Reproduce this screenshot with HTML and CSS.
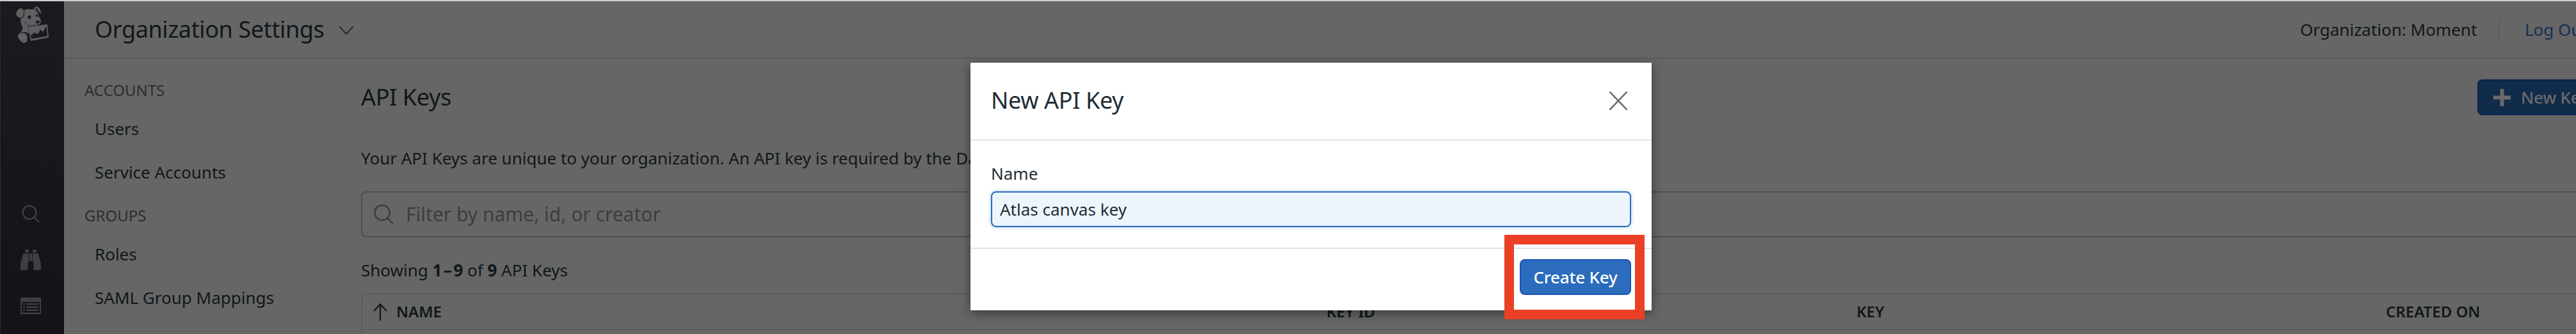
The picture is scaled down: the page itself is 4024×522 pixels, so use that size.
FILE: index.html
```html
<!DOCTYPE html>
<html lang="en">
<head>
<meta charset="utf-8">
<title>Organization Settings</title>
<link rel="stylesheet" href="styles.css">
</head>
<body>
<div class="app">
  <aside class="rail">
    <svg class="logo" viewBox="72 26 160 180">
      <path fill="#606062" d="M92 38C82 44 75 56 76 65C77 75 87 83 96 82C105 81 110 77 111 71L113 50C110 42 101 35 92 38Z"/>
      <path fill="#606062" d="M114 46C122 43 130 42 134 40L142 43L160 42C166 43 172 50 178 60L183 78C190 84 193 92 192 100C191 112 182 118 168 120C155 124 140 124 134 127L139 158C132 156 127 152 119 150C110 149 101 151 97 153C101 145 104 137 107 128L98 107C96 100 97 91 98 85C107 83 113 77 114 71Z"/>
      <path fill="#606062" d="M160 40C163 33 168 28 174 29C184 32 192 44 194 60C187 59 183 56 179 49L173 36C169 37 168 40 166 44Z"/>
      <path fill="#606062" d="M95 154C87 157 83 166 84 173C85 180 93 183 98 193C104 203 121 203 127 193C131 180 129 164 120 157C112 151 102 151 95 154Z"/>
      <path fill="none" stroke="#1b191e" stroke-width="2" d="M112 49C114 62 112 76 104 81M97 155C110 150 123 155 129 167M117 103C126 115 141 121 154 119C162 117 169 110 173 107"/>
      <ellipse cx="138" cy="79" rx="8" ry="8" fill="#1b191e" transform="rotate(-25 138 79)"/>
      <ellipse cx="173" cy="72" rx="5" ry="6" fill="#1b191e"/>
      <path fill="#1b191e" d="M166 99C171 95 180 94 187 97C189 103 183 109 177 109C171 108 169 102 166 99ZM176 108l6 8 8 -3 -2 6 -12 1z"/>
      <path fill="#606062" stroke="#1b191e" stroke-width="7" d="M134 127L221 115L227 173L146 189Z"/>
      <path fill="#606062" stroke="#606062" stroke-width="4" d="M134 127L221 115L227 173L146 189Z"/>
      <path fill="#1b191e" d="M148 182L144 162L150 164L160 151L167 156L179 158L190 137L202 149L218 122L223 168Z"/>
    </svg>
    <nav class="rail-nav">
      <svg class="rail-icon" viewBox="0 0 32 32"><g fill="none" stroke="#3f3e42" stroke-width="2.4"><circle cx="14" cy="15" r="10.4"/><path d="M21.500 22.500L29 30.500"/></g></svg>
      <svg class="rail-icon" viewBox="0 0 32 32"><path fill="#3f3e42" d="M7 0h6v4.500h-6zM19 0h6v4.500h-6zM4.500 6h8.500v14h-1.500v12h-11.500v-10zM19 6h8.500l4.500 16v10h-11.500v-12h-1.500zM14 6h4v12h-4z"/></svg>
      <svg class="rail-icon" viewBox="0 1 32 32"><path fill="#3f3e42" fill-rule="evenodd" d="M2 3h28q2 0 2 2v22q0 2 -2 2h-28q-2 0 -2 -2v-22q0 -2 2 -2zM2 10v16.500h28v-16.500zM4 12h3v2.500h-3zM9 12h19v2.500h-19zM4 16.800h3v2.500h-3zM9 16.800h19v2.500h-19zM4 21.600h3v2.500h-3zM9 21.600h19v2.500h-19z"/></svg>
    </nav>
  </aside>

  <div class="page">
    <header class="topbar">
      <div class="topbar-title">Organization Settings
        <svg class="chevron" viewBox="0 0 24 16"><path d="M1.500 1.500L12 13L22.500 1.500" fill="none" stroke="#2c3134" stroke-width="2.400"/></svg>
      </div>
      <div class="account">
        <span class="org">Organization: Moment</span>
        <span class="divider"></span>
        <a class="logout">Log Out</a>
      </div>
    </header>

    <div class="content">
      <nav class="menu">
        <div class="menu-label">ACCOUNTS</div>
        <a class="menu-item">Users</a>
        <a class="menu-item">Service Accounts</a>
        <div class="menu-label menu-label-next">GROUPS</div>
        <a class="menu-item">Roles</a>
        <a class="menu-item">SAML Group Mappings</a>
      </nav>

      <main class="main">
        <div class="main-head">
          <h1 class="heading">API Keys</h1>
          <button class="new-key"><svg class="plus" viewBox="0 0 27 27"><path fill="#6b6b6b" d="M10.500 0h6v10.500h10.500v6h-10.500v10.500h-6v-10.500h-10.500v-6h10.500z"/></svg>New Key</button>
        </div>
        <p class="intro">Your API Keys are unique to your organization. An API key is required by the Datadog Agent.</p>
        <div class="filter">
          <svg class="filter-icon" viewBox="0 0 32 32"><g fill="none" stroke="#3a3e40" stroke-width="2.400"><circle cx="13" cy="13.500" r="11.700"/><path d="M21 22L30 31"/></g></svg>
          <span>Filter by name, id, or creator</span>
        </div>
        <p class="count">Showing <b>1<span class="dash">–</span>9</b> of <b>9</b> API Keys</p>
        <div class="table">
          <div class="table-head">
            <div class="cell cell-name"><svg class="arrow" viewBox="0 0 22 27"><path d="M11 27V1.500M1 12L11 1.500L21 12" fill="none" stroke="#10171a" stroke-width="2.200"/></svg>NAME</div>
            <div class="cell">KEY ID</div>
            <div class="cell">KEY</div>
            <div class="cell">CREATED ON</div>
          </div>
        </div>
      </main>
    </div>
  </div>

  <section class="modal">
    <div class="modal-head">
      <h2 class="modal-title">New API Key</h2>
      <svg class="close" viewBox="0 0 28 29"><path d="M1.200 1.200L26.800 27.800M26.800 1.200L1.200 27.800" fill="none" stroke="#646c73" stroke-width="2.500" stroke-linecap="round"/></svg>
    </div>
    <div class="modal-body">
      <label class="field-label">Name</label>
      <div class="field">Atlas canvas key</div>
    </div>
    <div class="modal-foot">
      <button class="create">Create Key</button>
    </div>
  </section>
  <div class="highlight"></div>
</div>
</body>
</html>
```

FILE: styles.css
```css
* { box-sizing: border-box; }

html { height: 522px; overflow: hidden; }

body {
  height: 522px;
  margin: 0;
  overflow: hidden;
  background: #666;
  color: #10171a;
  font: 26px/40px "Noto Sans", "Liberation Sans", sans-serif;
}

h1, h2, p { margin: 0; font-weight: 400; }

.app {
  position: relative;
  display: flex;
  width: 4024px;
  height: 522px;
  border-top: 2px solid #cfcfcf;
  overflow: hidden;
}

.rail {
  display: flex;
  flex-direction: column;
  flex: none;
  width: 100px;
  padding: 7px 0 0;
  border-left: 1px solid #2d2c32;
  background: linear-gradient(#1c1a1f, #151319);
}

.logo { width: 53px; height: 60px; margin-left: 23px; }

.rail-nav {
  display: flex;
  flex-direction: column;
  gap: 41px;
  margin: 248px 0 0 31px;
}

.rail-icon { width: 32px; height: 32px; }

.page { flex: 1; min-width: 0; }

.topbar {
  display: flex;
  justify-content: space-between;
  height: 90px;
  padding-left: 48px;
  border-bottom: 2px solid #5b5b5c;
}

.topbar-title {
  display: flex;
  align-items: center;
  gap: 22px;
  font-size: 36px;
  letter-spacing: -.37px;
}

.chevron { width: 24px; height: 16px; margin-top: 3px; }

.account { display: flex; align-items: center; width: 431px; white-space: nowrap; }
.org { flex: none; width: 309px; }
.divider { flex: none; width: 4px; height: 34px; margin-right: 38px; background: #5e6063; }
.logout { flex: none; color: #142f54; }

.content { display: flex; }

.menu { flex: none; width: 464px; padding: 24px 0 0 32px; }
.menu-label { height: 52px; line-height: 50px; font-size: 24px; color: #2a2f32; }
.menu-label-next { margin-top: 8px; }
.menu-item { display: block; height: 68px; padding-left: 16px; line-height: 67px; }

.main { flex: 1; min-width: 0; padding-top: 32px; }

.main-head { display: flex; justify-content: space-between; align-items: center; height: 56px; }
.heading { font-size: 36px; letter-spacing: -.37px; }

.new-key {
  display: flex;
  align-items: center;
  gap: 16px;
  flex: none;
  width: 190px;
  height: 56px;
  margin-right: -36px;
  padding: 0 0 0 23px;
  border: 2px solid #0c2152;
  border-radius: 8px;
  background: #112b4a;
  color: #6b6b6b;
  font: 500 26px "Noto Sans", sans-serif;
  letter-spacing: -.2px;
  white-space: nowrap;
}

.plus { flex: none; width: 27px; height: 27px; }

.intro { margin-top: 47px; white-space: nowrap; }

.filter {
  display: flex;
  align-items: center;
  gap: 18px;
  height: 72px;
  margin: 32px -20px 0 0;
  padding-left: 18px;
  border: 2px solid #4b4f55;
  border-radius: 8px;
  color: #3a3e40;
  font-size: 30px;
}

.filter-icon { width: 32px; height: 32px; }

.count { margin-top: 31px; }
.dash { margin: 0 2.500px; }

.table {
  height: 90px;
  margin: 16px -20px 0 0;
  border: 2px solid #5b5b5c;
  border-radius: 8px 8px 0 0;
}

.table-head {
  display: grid;
  grid-template-columns: 1506px 828px 827px 1fr;
  height: 56px;
  border-bottom: 2px solid #5b5b5c;
  font-size: 24px;
  font-weight: 600;
  line-height: 54px;
}

.cell-name { display: flex; align-items: center; gap: 14px; padding-left: 17px; }
.arrow { width: 22px; height: 27px; }

.modal {
  position: absolute;
  left: 1516px;
  top: 96px;
  width: 1064px;
  height: 387px;
  background: #fff;
  color: #1f2d35;
  box-shadow: 0 4px 16px rgba(0, 0, 0, .45);
}

.modal-head {
  display: flex;
  justify-content: space-between;
  align-items: center;
  height: 122px;
  padding: 0 38px 2px 32px;
  border-bottom: 2px solid #e0e4ea;
}

.modal-title { font-size: 36px; letter-spacing: -.37px; }
.close { width: 28px; height: 29px; }

.modal-body { height: 167px; padding: 31px 32px 0; }
.field-label { display: block; height: 48px; }

.field {
  height: 56px;
  padding-left: 12px;
  border: 2px solid #2b6cbc;
  border-radius: 8px;
  background: #edf5fc;
  line-height: 52px;
  box-shadow: 0 0 6px rgba(43, 135, 190, .4);
}

.modal-foot {
  display: flex;
  justify-content: flex-end;
  height: 98px;
  padding: 16px 32px 0;
  border-top: 2px solid #e0e4ea;
}

.create {
  width: 174px;
  height: 56px;
  padding: 0;
  border: 2px solid #1e55b5;
  border-radius: 8px;
  background: #2b6cbc;
  color: #fff;
  font: 500 26px "Noto Sans", sans-serif;
  letter-spacing: -.2px;
}

.highlight {
  position: absolute;
  left: 2350px;
  top: 365px;
  width: 219px;
  height: 132px;
  border: 15px solid #eb4026;
}
```
